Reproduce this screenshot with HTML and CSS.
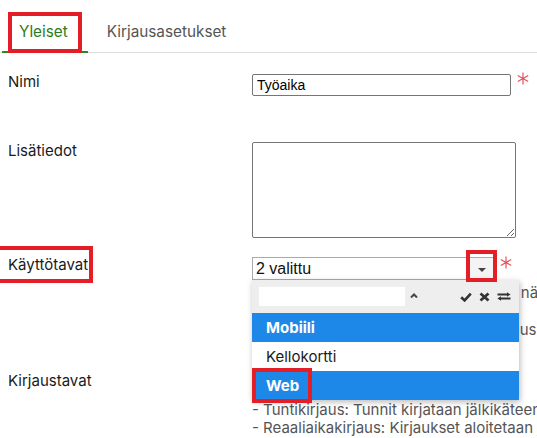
FILE: index.html
```html
<!DOCTYPE html>
<html lang="fi">
<head>
<meta charset="utf-8">
<title>Työaika</title>
<link rel="stylesheet" href="styles.css">
</head>
<body>
<div class="tabs">
  <div class="tab active">Yleiset<span class="mark mark-tab"></span></div>
  <div class="tab">Kirjausasetukset</div>
</div>
<div class="form">
  <div class="row row-name">
    <div class="label">Nimi</div>
    <div class="field">
      <div class="control-line">
        <input class="text-input" type="text" value="Työaika">
        <svg class="req req-input" viewBox="0 0 12 13" width="12" height="13"><path d="M6 0.5V12.5M0.8 3.5L11.2 9.5M0.8 9.5L11.2 3.5" stroke="#e8505b" stroke-width="1.2" fill="none"/></svg>
      </div>
    </div>
  </div>
  <div class="row row-info">
    <div class="label">Lisätiedot</div>
    <div class="field">
      <textarea class="textarea"></textarea>
    </div>
  </div>
  <div class="row row-use">
    <div class="label">Käyttötavat<span class="mark mark-label"></span></div>
    <div class="field">
      <div class="control-line">
        <div class="select-wrap">
          <div class="select">2 valittu</div>
          <div class="select-arrow"><svg viewBox="0 0 8 4" width="8" height="4"><path d="M0 0H8L4 4Z" fill="#444"/></svg></div>
          <span class="mark mark-arrow"></span>
          <div class="dropdown">
            <div class="dd-head">
              <div class="dd-search"></div>
              <svg class="dd-caret" viewBox="0 0 8 5" width="8" height="5"><path d="M1 4.5L4 1.5L7 4.5" stroke="#444" stroke-width="2" fill="none"/></svg>
              <div class="dd-tools">
                <svg viewBox="0 0 12 10" width="12" height="10"><path d="M1.2 5.2L4.6 8.4L10.8 1.6" stroke="#333" stroke-width="2.6" fill="none"/></svg>
                <svg viewBox="0 0 11 10" width="11" height="10"><path d="M1.5 1.5L9.5 8.5M9.5 1.5L1.5 8.5" stroke="#333" stroke-width="2.8" fill="none"/></svg>
                <svg viewBox="0 0 14 9" width="14" height="9"><path d="M0.5 1.6H10V3.4H0.5Z M10 0.3L13.6 2.5L10 4.7Z M4 5.6H13.5V7.4H4Z M4 4.3L0.4 6.5L4 8.7Z" fill="#333"/></svg>
              </div>
            </div>
            <div class="dd-item selected">Mobiili</div>
            <div class="dd-item">Kellokortti</div>
            <div class="dd-item selected">Web<span class="mark mark-web"></span></div>
          </div>
        </div>
        <svg class="req req-select" viewBox="0 0 12 13" width="12" height="13"><path d="M6 0.5V12.5M0.8 3.5L11.2 9.5M0.8 9.5L11.2 3.5" stroke="#e8505b" stroke-width="1.2" fill="none"/></svg>
      </div>
      <div class="help help-use">
        <div>Valitse, millä laitteilla työaika on myös näkyvissä.</div>
        <div>Mobiili: kirjaus mobiilisovelluksella</div>
        <div>Kellokortti: kirjaus kellokortilla ja leimaus</div>
      </div>
    </div>
  </div>
  <div class="row row-mode">
    <div class="label">Kirjaustavat</div>
    <div class="field">
      <div class="select plain">Tuntikirjaus</div>
      <div class="help help-mode">
        <div>- Tuntikirjaus: Tunnit kirjataan jälkikäteen.</div>
        <div>- Reaaliaikakirjaus: Kirjaukset aloitetaan ja lopetetaan reaaliajassa.</div>
      </div>
    </div>
  </div>
</div>
</body>
</html>
```
FILE: styles.css
```css
* { box-sizing: border-box; }
html, body { margin: 0; overflow: hidden; }
body {
  width: 537px;
  height: 438px;
  background: #fff;
  color: #1a1a1a;
  font-family: Inter, Roboto, "Liberation Sans", sans-serif;
  font-size: 15px;
}

.tabs {
  display: flex;
  height: 53px;
  padding-left: 2px;
  border-bottom: 1px solid #dedede;
}
.tab {
  position: relative;
  height: 53px;
  margin-bottom: -1px;
  padding: 22px 19px 0;
  line-height: 20px;
  font-size: 15.3px;
  color: #555;
  border-bottom: 2px solid transparent;
}
.tab.active {
  padding-left: 17px;
  padding-right: 20px;
  color: #2a7d1e;
  border-bottom-color: #2a8a1e;
}

.mark {
  position: absolute;
  border: 4px solid #e41e26;
  pointer-events: none;
  z-index: 20;
}
.mark-tab { left: 6px; top: 12px; width: 74px; height: 41px; }
.mark-label { left: -7px; top: -9px; width: 100px; height: 37px; }
.mark-arrow { left: 214px; top: -7px; width: 31px; height: 32px; }
.mark-web { left: 0; top: -3px; width: 60px; height: 35px; }

.form { padding-top: 19px; }
.row { display: flex; align-items: flex-start; }
.label {
  position: relative;
  flex: none;
  width: 252px;
  padding-left: 8px;
  line-height: 20px;
}
.field { position: relative; flex: 1; }
.row-name { height: 69px; }
.row-info { height: 114px; }
.row-use { height: 116px; }

.control-line { display: flex; align-items: flex-start; }

.text-input {
  margin: 2px 0 0;
  width: 259px;
  height: 22px;
  padding: 0 4px;
  border: 1px solid #767676;
  border-radius: 2px;
  font: 14px/20px "Liberation Sans", Arial, sans-serif;
  color: #000;
}
.req { flex: none; }
.req-input { margin-left: 6px; }
.req-select { margin-left: 3px; margin-top: 1px; }

.textarea {
  display: block;
  margin: 1px 0 0;
  width: 264px;
  height: 96px;
  border: 1px solid #767676;
  border-radius: 2px;
  resize: both;
}

.select-wrap {
  position: relative;
  width: 245px;
  margin-top: 2px;
}
.select {
  height: 23px;
  padding-left: 3px;
  border: 1px solid #aaa;
  font: 16px/21px "Liberation Sans", Arial, sans-serif;
  color: #111;
}
.select-arrow {
  position: absolute;
  top: 1px;
  right: 0;
  width: 31px;
  height: 22px;
  display: flex;
  align-items: center;
  justify-content: center;
  padding-top: 2px;
  background: #f4f4f4;
}
.select-arrow svg { display: block; }

.dropdown {
  position: absolute;
  left: 0;
  top: 23px;
  width: 267px;
  background: #fff;
  box-shadow: 1px 2px 6px rgba(0, 0, 0, 0.28);
  z-index: 10;
}
.dd-head {
  display: flex;
  align-items: center;
  height: 33px;
  padding: 0 8px 0 7px;
  background: #eee;
}
.dd-search {
  width: 146px;
  height: 19px;
  background: #fff;
}
.dd-caret { margin-left: 5px; margin-top: -3px; }
.dd-tools {
  display: flex;
  align-items: center;
  gap: 7px;
  margin-left: auto;
}
.dd-tools svg { display: block; }
.dd-item {
  position: relative;
  height: 29px;
  padding-left: 14px;
  line-height: 29px;
  font-size: 15px;
  color: #1a1a1a;
}
.dd-item.selected {
  background: #1e88e8;
  color: #fff;
  font-weight: 700;
}

.help {
  font-size: 15px;
  color: #555;
  white-space: nowrap;
}
.help-use { margin-top: 4px; line-height: 18.5px; }
.select.plain { margin-top: 1px; width: 245px; height: 24px; }
.help-mode { margin-top: 5px; line-height: 18px; }
```
